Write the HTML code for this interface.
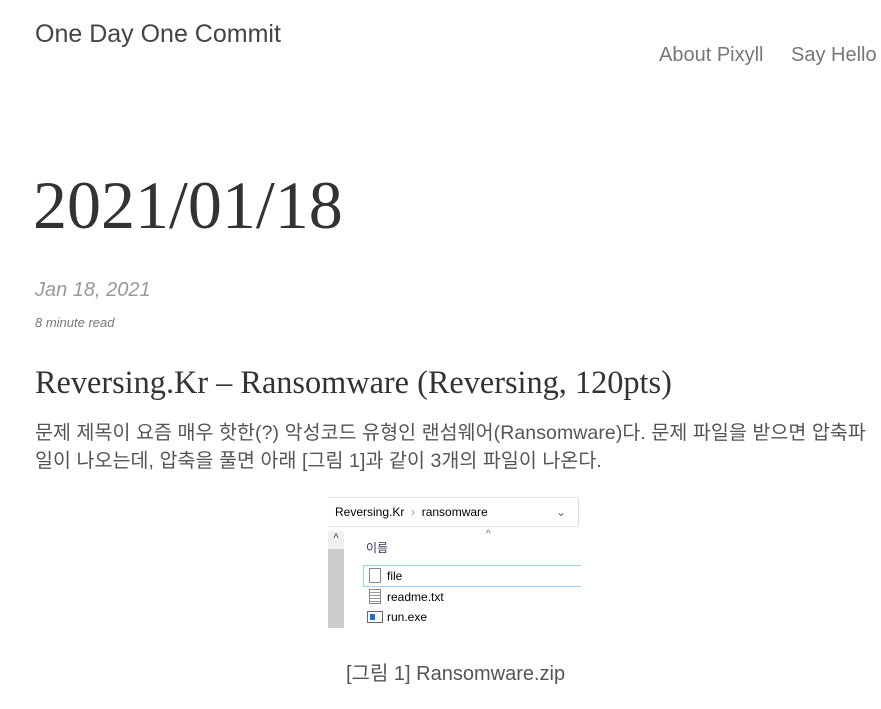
<!DOCTYPE html>
<html><head><meta charset="utf-8"><style>
body{margin:0;background:#fff;color:#333;font-family:"Liberation Sans","Noto Sans CJK KR",sans-serif;width:881px;height:709px;overflow:hidden;position:relative}
.a{position:absolute;white-space:nowrap}
</style></head><body>
<div class="a" style="left:35px;top:20px;font-size:25px;color:#444;font-weight:300">One Day One Commit</div>
<div class="a" style="left:659px;top:44px;font-size:20px;color:#777">About Pixyll</div>
<div class="a" style="left:791px;top:44px;font-size:20px;color:#777">Say Hello</div>
<div class="a" style="left:33px;top:166px;font-size:68px;font-family:'Liberation Serif',serif;color:#333">2021/01/18</div>
<div class="a" style="left:35px;top:279px;font-size:20px;font-style:italic;color:#999">Jan 18, 2021</div>
<div class="a" style="left:35px;top:315px;font-size:13px;font-style:italic;color:#777">8 minute read</div>
<div class="a" style="left:35px;top:364px;font-size:32.3px;font-family:'Liberation Serif',serif;color:#333">Reversing.Kr – Ransomware (Reversing, 120pts)</div>
<div class="a" style="left:35px;top:419px;font-size:19.5px;line-height:28px;color:#555;letter-spacing:0.07px">문제 제목이 요즘 매우 핫한(?) 악성코드 유형인 랜섬웨어(Ransomware)다. 문제 파일을 받으면 압축파<br>일이 나오는데, 압축을 풀면 아래 [그림 1]과 같이 3개의 파일이 나온다.</div>
<div class="a" style="left:328px;top:497px;width:253px;height:131px;background:#fff;font-size:12px;color:#000;overflow:hidden">
 <div style="position:absolute;left:0;top:0;width:250px;height:28px;border-top:1px solid #e5e5e5;border-bottom:1px solid #e5e5e5"></div>
 <div style="position:absolute;left:250px;top:0;width:1px;height:30px;background:#ddd"></div>
 <div style="position:absolute;left:7px;top:8px">Reversing.Kr &nbsp;<span style="color:#999">›</span>&nbsp; ransomware</div>
 <div style="position:absolute;left:228px;top:8px;color:#666">⌄</div>
 <div style="position:absolute;left:0;top:34px;width:16px;height:97px;background:#ccc"></div>
 <div style="position:absolute;left:0;top:34px;width:16px;height:18px;background:#f0f0f0;font-size:10px;text-align:center;color:#333">˄</div>
 <div style="position:absolute;left:158px;top:32px;color:#666;font-size:10px">^</div>
 <div style="position:absolute;left:38px;top:42px;color:#335">이름</div>
 <div style="position:absolute;left:35px;top:68px;width:220px;height:20px;border:1px solid #99d1ff"></div>
 <div style="position:absolute;left:41px;top:71px;width:10px;height:13px;border:1px solid #888;background:#fff"></div>
 <div style="position:absolute;left:59px;top:72px">file</div>
 <div style="position:absolute;left:41px;top:92px;width:10px;height:13px;border:1px solid #888;background:repeating-linear-gradient(#fff 0 2px,#999 2px 3px)"></div>
 <div style="position:absolute;left:59px;top:93px">readme.txt</div>
 <div style="position:absolute;left:39px;top:114px;width:14px;height:10px;border:1px solid #666;background:#fff"><div style="width:5px;height:6px;background:#1a6fd1;margin:2px"></div></div>
 <div style="position:absolute;left:59px;top:113px">run.exe</div>
</div>
<div class="a" style="left:346px;top:657px;font-size:20px;color:#555">[그림 1] Ransomware.zip</div>
</body></html>
